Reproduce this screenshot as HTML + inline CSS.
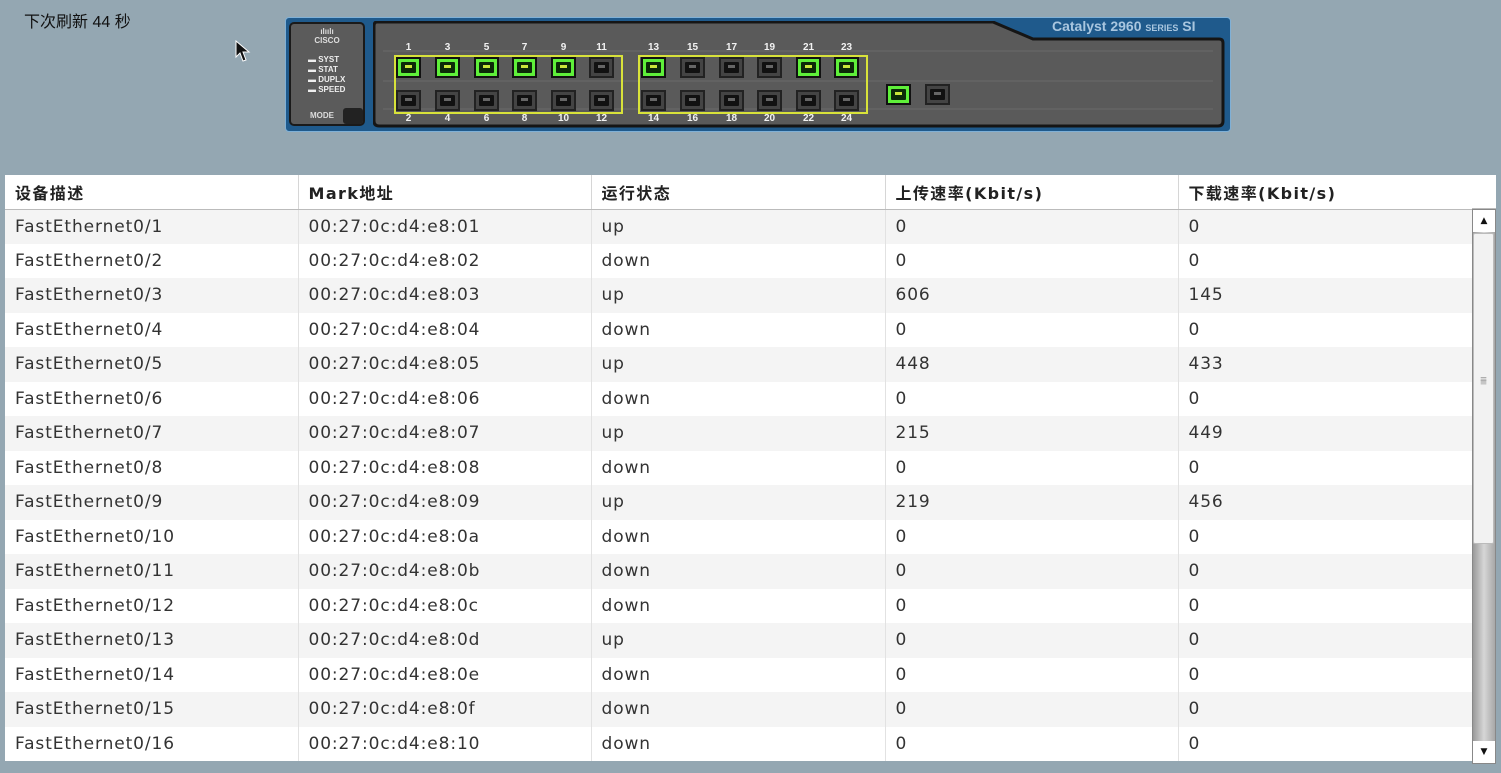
<!DOCTYPE html>
<html><head><meta charset="utf-8"><style>
*{margin:0;padding:0;box-sizing:border-box}
body{width:1501px;height:773px;background:#94a7b2;position:relative;overflow:hidden;font-family:"DejaVu Sans","Noto Sans CJK SC",sans-serif}
.abs{position:absolute}
.p{position:absolute;width:25px;height:21px;border:2px solid #111;background:#3a3a3a}
.p i{position:absolute;left:3px;top:3px;width:15px;height:11px;background:#111;border-radius:1px}
.p i:after{content:"";position:absolute;left:4px;top:3px;width:7px;height:3px;background:#666}
.p.g{background:#5ff03a}
.p.g i{background:#0c2a08}
.p.g i:after{background:#c9e63a}
.p.k{border-color:#222;background:#444}
.n{position:absolute;color:#f2f2f2;font-size:10px;font-weight:bold;width:25px;text-align:center;font-family:"Liberation Sans",sans-serif}
table{position:absolute;left:5px;top:175px;border-collapse:collapse;width:1467px;table-layout:fixed}
th{height:34px;text-align:left;padding-left:10px;font-size:16px;letter-spacing:1.4px;font-weight:bold;color:#222;background:#fff;border-right:1px solid #d6d6d6;border-bottom:1px solid #bbb;white-space:nowrap}
td{height:34.5px;padding-left:10px;font-size:17px;letter-spacing:.9px;color:#333;border-right:1px solid #e2e2e2;white-space:nowrap}
tr:nth-child(even) td{background:#f4f4f4}
tr:nth-child(odd) td{background:#fff}
</style></head><body>
<div class="abs" style="left:24px;top:8px;font-size:16px;color:#111;font-family:'Liberation Sans','Noto Sans CJK SC',sans-serif">下次刷新 44 秒</div>
<svg class="abs" style="left:235px;top:40px" width="16" height="24"><path d="M1 1 L1 17 L5 13 L8 21 L11 20 L8 12 L14 12 Z" fill="#111" stroke="#fff" stroke-width="1"/></svg>

<div class="abs" style="left:285px;top:17px;width:946px;height:115px;background:#1f5a8c;border-radius:4px;border:1px solid #7fb0d6"></div>
<div class="abs" style="left:1052px;top:18px;font-size:14px;font-weight:bold;color:#a9c6df;font-family:'Liberation Sans',sans-serif">Catalyst 2960 <span style="font-size:9px">SERIES</span> SI</div>
<div class="abs" style="left:289px;top:22px;width:76px;height:104px;background:#5b5b5b;border:2px solid #1a1a1a;border-radius:5px"></div>
<div class="abs" style="left:302px;top:27px;width:50px;text-align:center;color:#ddd;font-size:8px;font-weight:bold;line-height:9px;font-family:'Liberation Sans',sans-serif">ılıılı<br>CISCO</div>
<div class="abs" style="left:308px;top:55px;color:#eee;font-size:8px;font-weight:bold;line-height:10px;font-family:'Liberation Sans',sans-serif">▬ SYST<br>▬ STAT<br>▬ DUPLX<br>▬ SPEED</div>
<div class="abs" style="left:310px;top:111px;color:#ddd;font-size:8px;font-weight:bold;font-family:'Liberation Sans',sans-serif">MODE</div>
<div class="abs" style="left:343px;top:108px;width:20px;height:16px;background:#222;border-radius:3px"></div>
<svg class="abs" style="left:373px;top:21px" width="852" height="107"><path d="M4 1 L620 1 L660 18 L846 18 Q850 18 850 22 L850 100 Q850 105 845 105 L6 105 Q1 105 1 100 L1 5 Q1 1 4 1 Z" fill="#5a5a5a" stroke="#151515" stroke-width="3"/>
<g stroke="#6e6e6e" stroke-width="1" fill="none" opacity=".8"><path d="M10 30 H840 M10 60 H840 M10 88 H840"/></g></svg>
<div class="abs" style="left:394px;top:55px;width:229px;height:59px;border:2px solid #d8e23a"></div>
<div class="abs" style="left:638px;top:55px;width:230px;height:59px;border:2px solid #d8e23a"></div>

<div class="p g" style="left:396px;top:57px"><i></i></div><div class="n" style="left:396px;top:42px">1</div>
<div class="p g" style="left:435px;top:57px"><i></i></div><div class="n" style="left:435px;top:42px">3</div>
<div class="p g" style="left:474px;top:57px"><i></i></div><div class="n" style="left:474px;top:42px">5</div>
<div class="p g" style="left:512px;top:57px"><i></i></div><div class="n" style="left:512px;top:42px">7</div>
<div class="p g" style="left:551px;top:57px"><i></i></div><div class="n" style="left:551px;top:42px">9</div>
<div class="p k" style="left:589px;top:57px"><i></i></div><div class="n" style="left:589px;top:42px">11</div>
<div class="p k" style="left:396px;top:90px"><i></i></div><div class="n" style="left:396px;top:113px">2</div>
<div class="p k" style="left:435px;top:90px"><i></i></div><div class="n" style="left:435px;top:113px">4</div>
<div class="p k" style="left:474px;top:90px"><i></i></div><div class="n" style="left:474px;top:113px">6</div>
<div class="p k" style="left:512px;top:90px"><i></i></div><div class="n" style="left:512px;top:113px">8</div>
<div class="p k" style="left:551px;top:90px"><i></i></div><div class="n" style="left:551px;top:113px">10</div>
<div class="p k" style="left:589px;top:90px"><i></i></div><div class="n" style="left:589px;top:113px">12</div>

<div class="p g" style="left:641px;top:57px"><i></i></div><div class="n" style="left:641px;top:42px">13</div>
<div class="p k" style="left:680px;top:57px"><i></i></div><div class="n" style="left:680px;top:42px">15</div>
<div class="p k" style="left:719px;top:57px"><i></i></div><div class="n" style="left:719px;top:42px">17</div>
<div class="p k" style="left:757px;top:57px"><i></i></div><div class="n" style="left:757px;top:42px">19</div>
<div class="p g" style="left:796px;top:57px"><i></i></div><div class="n" style="left:796px;top:42px">21</div>
<div class="p g" style="left:834px;top:57px"><i></i></div><div class="n" style="left:834px;top:42px">23</div>
<div class="p k" style="left:641px;top:90px"><i></i></div><div class="n" style="left:641px;top:113px">14</div>
<div class="p k" style="left:680px;top:90px"><i></i></div><div class="n" style="left:680px;top:113px">16</div>
<div class="p k" style="left:719px;top:90px"><i></i></div><div class="n" style="left:719px;top:113px">18</div>
<div class="p k" style="left:757px;top:90px"><i></i></div><div class="n" style="left:757px;top:113px">20</div>
<div class="p k" style="left:796px;top:90px"><i></i></div><div class="n" style="left:796px;top:113px">22</div>
<div class="p k" style="left:834px;top:90px"><i></i></div><div class="n" style="left:834px;top:113px">24</div>
<div class="p g" style="left:886px;top:84px"><i></i></div>
<div class="p k" style="left:925px;top:84px"><i></i></div>

<table>
<colgroup><col style="width:293px"><col style="width:293px"><col style="width:294px"><col style="width:293px"><col style="width:294px"></colgroup>
<tr><th>设备描述</th><th>Mark地址</th><th>运行状态</th><th>上传速率(Kbit/s)</th><th>下载速率(Kbit/s)</th></tr>
<tr><td>FastEthernet0/1</td><td>00:27:0c:d4:e8:01</td><td>up</td><td>0</td><td>0</td></tr>
<tr><td>FastEthernet0/2</td><td>00:27:0c:d4:e8:02</td><td>down</td><td>0</td><td>0</td></tr>
<tr><td>FastEthernet0/3</td><td>00:27:0c:d4:e8:03</td><td>up</td><td>606</td><td>145</td></tr>
<tr><td>FastEthernet0/4</td><td>00:27:0c:d4:e8:04</td><td>down</td><td>0</td><td>0</td></tr>
<tr><td>FastEthernet0/5</td><td>00:27:0c:d4:e8:05</td><td>up</td><td>448</td><td>433</td></tr>
<tr><td>FastEthernet0/6</td><td>00:27:0c:d4:e8:06</td><td>down</td><td>0</td><td>0</td></tr>
<tr><td>FastEthernet0/7</td><td>00:27:0c:d4:e8:07</td><td>up</td><td>215</td><td>449</td></tr>
<tr><td>FastEthernet0/8</td><td>00:27:0c:d4:e8:08</td><td>down</td><td>0</td><td>0</td></tr>
<tr><td>FastEthernet0/9</td><td>00:27:0c:d4:e8:09</td><td>up</td><td>219</td><td>456</td></tr>
<tr><td>FastEthernet0/10</td><td>00:27:0c:d4:e8:0a</td><td>down</td><td>0</td><td>0</td></tr>
<tr><td>FastEthernet0/11</td><td>00:27:0c:d4:e8:0b</td><td>down</td><td>0</td><td>0</td></tr>
<tr><td>FastEthernet0/12</td><td>00:27:0c:d4:e8:0c</td><td>down</td><td>0</td><td>0</td></tr>
<tr><td>FastEthernet0/13</td><td>00:27:0c:d4:e8:0d</td><td>up</td><td>0</td><td>0</td></tr>
<tr><td>FastEthernet0/14</td><td>00:27:0c:d4:e8:0e</td><td>down</td><td>0</td><td>0</td></tr>
<tr><td>FastEthernet0/15</td><td>00:27:0c:d4:e8:0f</td><td>down</td><td>0</td><td>0</td></tr>
<tr><td>FastEthernet0/16</td><td>00:27:0c:d4:e8:10</td><td>down</td><td>0</td><td>0</td></tr>
</table>
<div class="abs" style="left:1472px;top:175px;width:24px;height:34px;background:#fff;border-bottom:1px solid #bbb"></div>
<div class="abs" style="left:1472px;top:209px;width:24px;height:555px;background:linear-gradient(90deg,#9a9a9a,#d6d6d6,#a8a8a8);border:1px solid #888"></div>
<div class="abs" style="left:1473px;top:210px;width:22px;height:22px;background:#fff;font-size:9px;text-align:center;line-height:22px;color:#111">▲</div>
<div class="abs" style="left:1473px;top:233px;width:21px;height:311px;background:#f2f2f2;border:1px solid #bbb;border-radius:2px;font-size:9px;color:#999;text-align:center;padding-top:145px;line-height:3px">≡<br>≡</div>
<div class="abs" style="left:1473px;top:741px;width:22px;height:22px;background:#fff;font-size:9px;text-align:center;line-height:22px;color:#111">▼</div>
</body></html>
